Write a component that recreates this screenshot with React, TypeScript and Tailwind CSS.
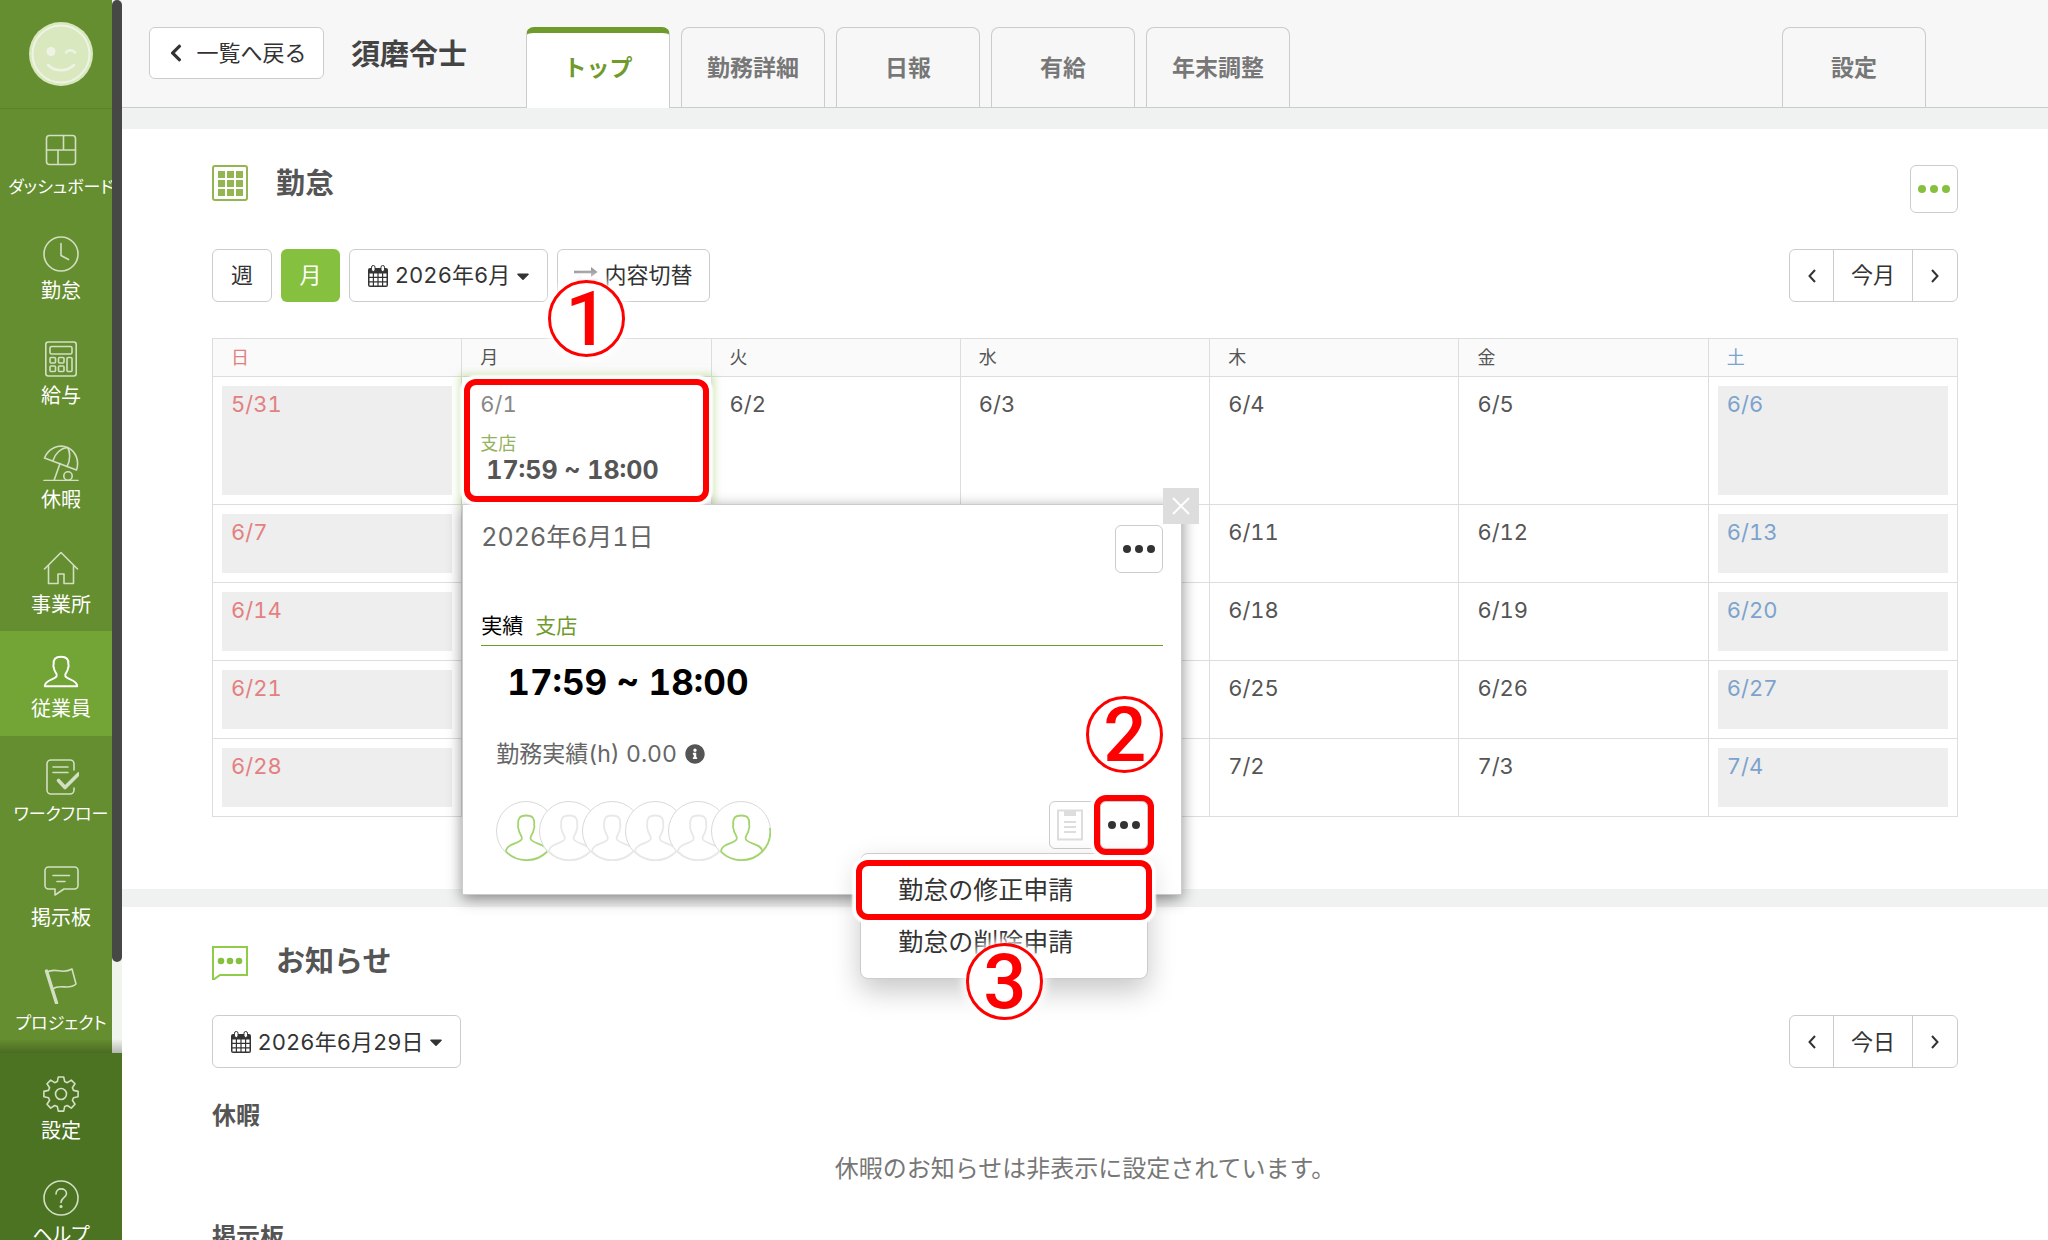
import React from "react";
import { FaCaretDown, FaChevronLeft, FaInfoCircle } from "react-icons/fa";

const OutlineIcon = ({ children }: { children: React.ReactNode }) => (
  <svg
    viewBox="0 0 36 36"
    className="size-9 shrink-0"
    fill="none"
    stroke="currentColor"
    strokeWidth="1.6"
    strokeLinecap="round"
    strokeLinejoin="round"
    aria-hidden="true"
  >
    {children}
  </svg>
);

const PersonPath =
  "M1.8 32.2c0-6.600 10.400-6.400 11.800-10 .5-1.400 0-2.600-1-3.800-1-1.400-1.600-3-1.700-4.600-.6-.6-.7-3.200-.2-3.600-.6-4.800 1.600-7.400 7.300-7.400s7.900 2.600 7.300 7.400c.5.4.4 3-.2 3.600-.1 1.600-.7 3.200-1.700 4.600-1 1.200-1.500 2.400-1 3.800 1.400 3.600 11.800 3.400 11.800 10z";

const icons: Record<string, React.ReactNode> = {
  dashboard: (
    <OutlineIcon>
      <rect x="3.500" y="3.500" width="29" height="29" rx="3" />
      <path d="M3.500 18h29M20.500 3.500V18M15 18v14.500" />
    </OutlineIcon>
  ),
  clock: (
    <OutlineIcon>
      <circle cx="18" cy="18" r="17" />
      <path d="M18 7.500V19.500l7.500 4" />
    </OutlineIcon>
  ),
  calculator: (
    <OutlineIcon>
      <rect x="2.800" y="1" width="30.400" height="34" rx="2.500" />
      <rect x="7" y="5.500" width="22" height="7.500" rx="1.500" />
      <rect x="7" y="16.500" width="5.500" height="5.500" rx="1" />
      <rect x="15.500" y="16.500" width="5.500" height="5.500" rx="1" />
      <rect x="7" y="25" width="5.500" height="5.500" rx="1" />
      <rect x="15.500" y="25" width="5.500" height="5.500" rx="1" />
      <rect x="24" y="16.500" width="5" height="14" rx="1" />
    </OutlineIcon>
  ),
  umbrella: (
    <OutlineIcon>
      <path d="M1.500 13C5 3.500 15.500-1.500 25 2.700c8 3.800 11.500 13.300 8.500 22.300z" />
      <path d="M10 15.500C12 9 17.500 3 24.500 2.500c3 4 3 13-.5 19" />
      <path d="M17 18.500l-6 17M1 35.500h34" />
      <circle cx="25" cy="31" r="4.200" />
    </OutlineIcon>
  ),
  home: (
    <OutlineIcon>
      <path d="M1.500 19L18 2.500 34.500 19M5.500 15.500V33.500h9.500V24h6v9.500h9.500V15.500" />
    </OutlineIcon>
  ),
  person: (
    <OutlineIcon>
      <path d={PersonPath} strokeWidth="2" />
    </OutlineIcon>
  ),
  workflow: (
    <OutlineIcon>
      <path d="M31 11V5a4 4 0 0 0-4-4H8a4 4 0 0 0-4 4v26a4 4 0 0 0 4 4h19a4 4 0 0 0 4-4v-2" />
      <path d="M10 8h15M10 13.500h15" />
      <path d="M15.500 21.500l6.500 7L35.500 15" strokeWidth="3.600" />
    </OutlineIcon>
  ),
  board: (
    <OutlineIcon>
      <path d="M5.500 4h26a3.500 3.500 0 0 1 3.500 3.500v15a3.500 3.500 0 0 1-3.500 3.500H21l-9 6v-6H5.500A3.500 3.500 0 0 1 2 22.500v-15A3.500 3.500 0 0 1 5.500 4z" />
      <path d="M10 12.500h16.500M14 18.500h8" />
    </OutlineIcon>
  ),
  flag: (
    <OutlineIcon>
      <path d="M3.500 3l10 32" strokeWidth="3.400" />
      <path d="M4 4c9-5 15 3 25-3l4 15c-8 7-15-1-23.500 5" />
    </OutlineIcon>
  ),
  gear: (
    <OutlineIcon>
      <circle cx="18" cy="18" r="5.500" />
      <path d="M15.300 1h5.400l1 4.600 2.600 1.100 4-2.600 3.700 3.700-2.600 4 1.100 2.600 4.600 1v5.400l-4.600 1-1.100 2.500 2.600 4-3.700 3.800-4-2.600-2.600 1-1 4.600h-5.400l-1-4.600-2.600-1-4 2.600-3.700-3.800 2.600-4-1.100-2.500-4.600-1v-5.400l4.600-1 1.100-2.600-2.600-4 3.700-3.700 4 2.600 2.600-1.100z" />
    </OutlineIcon>
  ),
  help: (
    <OutlineIcon>
      <circle cx="18" cy="18" r="17" />
      <path d="M13 14c0-7 10.500-6.500 10.500-.5 0 4-5.500 4.500-5.500 9" />
      <circle cx="18" cy="26.500" r=".8" fill="currentColor" />
    </OutlineIcon>
  ),
};

const mainNav = [
  { icon: "dashboard", label: "ダッシュボード" },
  { icon: "clock", label: "勤怠" },
  { icon: "calculator", label: "給与" },
  { icon: "umbrella", label: "休暇" },
  { icon: "home", label: "事業所" },
  { icon: "person", label: "従業員", active: true },
  { icon: "workflow", label: "ワークフロー" },
  { icon: "board", label: "掲示板" },
  { icon: "flag", label: "プロジェクト" },
];

function NavItem({ icon, label, active }: { icon: string; label: string; active?: boolean }) {
  return (
    <a
      href="#"
      className={
        "flex min-h-0 flex-1 flex-col items-center gap-1.5 pt-[23px] " +
        (active ? "bg-[#72a436] text-white" : "text-[#d3dfc3]")
      }
    >
      {icons[icon]}
      <span
        className={
          "whitespace-nowrap leading-[26px] text-white [font-feature-settings:'palt'] " +
          (label.length > 5 ? "text-[17px]" : "text-[20px]")
        }
      >
        {label}
      </span>
    </a>
  );
}

function Sidebar() {
  return (
    <aside className="flex h-full w-[122px] shrink-0 flex-col overflow-hidden">
      <div className="relative flex min-h-0 flex-1 flex-col bg-[#648e2f]">
        <a href="#" aria-label="ホーム" className="flex h-[109px] shrink-0 justify-center border-b border-[#5a8229] pt-[22px]">
          <svg viewBox="0 0 64 64" className="size-16" fill="none" stroke="#edf4e4" strokeLinecap="round" aria-hidden="true">
            <circle cx="32" cy="32" r="32" fill="#d9e8bf" stroke="none" />
            <circle cx="32" cy="32" r="28.500" strokeWidth="2" />
            <circle cx="22" cy="29.500" r="4.500" fill="#edf4e4" stroke="none" />
            <path d="M37 30.500c2-3 7-3 9 0" strokeWidth="2.500" />
            <path d="M19 43c7 7 19 7 26 0" strokeWidth="2.500" />
          </svg>
        </a>
        <nav className="flex min-h-0 flex-1 flex-col pb-1">
          {mainNav.map((n) => (
            <NavItem key={n.label} {...n} />
          ))}
        </nav>
        <div className="absolute inset-y-0 right-0 w-2.5 bg-[#eff4ec]">
          <div className="h-[962px] rounded-[5px] bg-[#464846]" />
        </div>
        <div className="absolute inset-x-0 bottom-0 h-3.5 bg-linear-to-b from-black/0 to-black/25" />
      </div>
      <nav className="flex h-[187px] shrink-0 flex-col overflow-hidden bg-[#4b7322]">
        <div className="flex h-[104px] shrink-0 flex-col">
          <NavItem icon="gear" label="設定" />
        </div>
        <div className="flex h-[104px] shrink-0 flex-col">
          <NavItem icon="help" label="ヘルプ" />
        </div>
      </nav>
    </aside>
  );
}

const tabs = ["トップ", "勤務詳細", "日報", "有給", "年末調整"];

function Tab({ label, active }: { label: string; active?: boolean }) {
  return (
    <a
      href="#"
      aria-current={active ? "page" : undefined}
      className={
        "flex w-36 items-center justify-center rounded-t-lg border-[#ccc] text-[23px] font-bold " +
        (active
          ? "-mb-px h-[81px] border-x border-t-[6px] border-t-[#6f9a2c] bg-white pb-1 text-[#6f9a2c]"
          : "h-20 border border-b-0 pt-0.5 text-[#777]")
      }
    >
      {label}
    </a>
  );
}

function Header() {
  return (
    <header className="flex h-[108px] shrink-0 items-end border-b border-[#ccc] bg-[#f7f7f7] pl-[27px] pr-[122px]">
      <div className="flex items-center gap-[27px] self-start pt-[27px]">
        <button className="flex h-[52px] w-[175px] items-center justify-center gap-2.5 rounded-md border border-[#ccc] bg-white text-[22px] text-[#333]">
          <FaChevronLeft className="size-5" />
          一覧へ戻る
        </button>
        <h1 className="w-[148px] whitespace-nowrap pt-1 text-[29px] font-bold text-[#444]">須磨令士</h1>
      </div>
      <nav className="ml-[27px] flex items-end gap-[11px]">
        {tabs.map((t, i) => (
          <Tab key={t} label={t} active={i === 0} />
        ))}
      </nav>
      <div className="ml-auto">
        <Tab label="設定" />
      </div>
    </header>
  );
}

const Dots = () => (
  <svg viewBox="0 0 32 8" className="h-2 w-8" fill="currentColor" aria-hidden="true">
    <circle cx="4" cy="4" r="4" />
    <circle cx="16" cy="4" r="4" />
    <circle cx="28" cy="4" r="4" />
  </svg>
);

const CalendarIcon = () => (
  <svg viewBox="0 0 20 22" className="h-[22px] w-5" aria-hidden="true">
    <path fill="currentColor" d="M2 3h16a2 2 0 0 1 2 2v15a2 2 0 0 1-2 2H2a2 2 0 0 1-2-2V5a2 2 0 0 1 2-2z" />
    <path
      fill="#fff"
      d="M1.500 8.500h3.300v3.300H1.500zM6 8.500h3.400v3.300H6zM10.600 8.500H14v3.300h-3.400zM15.200 8.500h3.300v3.300h-3.300zM1.500 13h3.300v3.300H1.500zM6 13h3.400v3.300H6zM10.600 13H14v3.300h-3.400zM15.200 13h3.300v3.300h-3.300zM1.500 17.500h3.300v3H1.500zM6 17.500h3.400v3H6zM10.600 17.500H14v3h-3.400zM15.200 17.500h3.300v3h-3.300z"
    />
    <rect x="3.500" y=".5" width="3.500" height="6" rx="1.700" fill="#fff" stroke="currentColor" />
    <rect x="13" y=".5" width="3.500" height="6" rx="1.700" fill="#fff" stroke="currentColor" />
  </svg>
);

const SwapIcon = () => (
  <svg viewBox="0 0 24 18" className="h-[18px] w-6" fill="none" strokeWidth="2.600" aria-hidden="true">
    <path d="M0 5h19" stroke="#999" />
    <path d="M17 0l6.500 5-6.500 5z" fill="#999" />
    <path d="M5 13h19" stroke="#ddd" />
    <path d="M7 8.500l-6.500 4.500L7 17.500z" fill="#eee" />
  </svg>
);

const Angle = ({ d }: { d: string }) => (
  <svg viewBox="0 0 8 14" className="h-3.5 w-2" fill="none" stroke="currentColor" strokeWidth="2" aria-hidden="true">
    <path d={d} />
  </svg>
);

const outlineButton =
  "flex h-[53px] items-center justify-center rounded-md border border-[#ccc] bg-white text-[22px] text-[#333]";

function Pager({ label }: { label: string }) {
  return (
    <div className="ml-auto flex h-[53px] divide-x divide-[#ccc] rounded-md border border-[#ccc] bg-white text-[22px] text-[#333]">
      <button aria-label="前へ" className="flex w-11 items-center justify-center">
        <Angle d="M7 1L1.500 7 7 13" />
      </button>
      <button className="w-[79px]">{label}</button>
      <button aria-label="次へ" className="flex w-11 items-center justify-center">
        <Angle d="M1 1l5.500 6L1 13" />
      </button>
    </div>
  );
}

const StepNumber = ({ n, className }: { n: number; className: string }) => (
  <span
    className={
      "absolute z-30 flex size-[77px] items-center justify-center rounded-full border-[3px] border-[#f00] bg-white font-['Roboto',sans-serif] text-[76px] font-medium leading-none text-[#f00] shadow-[0_0_8px_4px_rgba(255,255,255,0.9)] " +
      className
    }
  >
    {n}
  </span>
);

const Highlight = ({ className }: { className: string }) => (
  <span
    className={
      "pointer-events-none absolute z-20 rounded-xl border-[6px] border-[#f00] shadow-[0_0_2px_4px_rgba(255,255,255,0.95)] " +
      className
    }
  />
);

function Avatar({ green }: { green?: boolean }) {
  return (
    <li className="-mr-[17px] size-[60px] rounded-full bg-white">
      <svg viewBox="0 0 60 60" className="size-[60px]" fill="none" aria-hidden="true">
        <circle cx="30" cy="30" r="29.500" stroke="#d9d9d9" />
        <g stroke={green ? "#a3d46e" : "#e8e8e8"} strokeWidth="1.800" strokeLinejoin="round">
          <path d="M10 50.500c0-8 14-7.500 15.700-12.500.6-2-.5-3.500-1.400-5-1.200-1.700-1.600-3.400-1.700-5-.7-1-.8-3.500-.3-4-.7-6 1-9.500 7.900-9.500s8.600 3.500 7.900 9.500c.5.500.4 3-.3 4-.1 1.600-.5 3.300-1.700 5-.9 1.500-2 3-1.400 5 1.700 5 16 4.500 16.600 12" />
          <path d={green ? "M10 50.500c11 11.500 30 11.500 41.300 0A28.500 28.500 0 0 0 59 27" : "M10 50.500c11 11.500 30 11.500 41.300 0"} />
        </g>
      </svg>
    </li>
  );
}

function DayPopup() {
  return (
    <div
      role="dialog"
      aria-label="2026年6月1日"
      className="absolute left-0 top-full z-10 w-[720px] border border-[#ccc] bg-white pb-[33px] pl-[18px] pr-[18px] pt-5 shadow-[0_4px_14px_rgba(0,0,0,0.45)]"
    >
      <button
        aria-label="閉じる"
        className="absolute -right-[18px] -top-[17px] flex size-9 items-center justify-center bg-[#ddd] text-white"
      >
        <svg viewBox="0 0 18 18" className="size-[18px]" stroke="currentColor" strokeWidth="2" aria-hidden="true">
          <path d="M1 1l16 16M17 1L1 17" />
        </svg>
      </button>
      <div className="flex items-start justify-between">
        <h3 className="text-[25px] leading-6 text-[#666]">2026年6月1日</h3>
        <button aria-label="メニュー" className="flex size-12 items-center justify-center rounded-md border border-[#ccc] text-[#333]">
          <Dots />
        </button>
      </div>
      <div className="mt-[38px] flex gap-3 border-b border-[#6f9a2c] pb-1 text-[21px] leading-[30px]">
        <span className="text-black">実績</span>
        <span className="text-[#6f9a2c]">支店</span>
      </div>
      <p className="mt-3.5 pl-[26px] text-[35px] font-bold leading-11 text-black">17:59 ~ 18:00</p>
      <p className="mt-[34px] flex items-center gap-2 pl-[15px] text-[23px] leading-8 text-[#666]">
        勤務実績(h) 0.00
        <FaInfoCircle className="size-5 text-[#555]" />
      </p>
      <div className="mt-[31px] flex justify-between pl-[15px] pr-[15px]">
        <ul className="flex">
          {[true, false, false, false, false, true].map((g, i) => (
            <Avatar key={i} green={g} />
          ))}
        </ul>
        <div className="flex items-start gap-[3px]">
          <button aria-label="メモ" className="flex size-12 items-center rounded-md border border-[#ccc] pl-[7px]">
            <svg viewBox="0 0 26 32" className="h-8 w-[26px]" fill="none" stroke="#ddd" strokeWidth="2" aria-hidden="true">
              <rect x="1" y="1.500" width="24" height="29" />
              <path d="M7 1h12v6H7z" fill="#ddd" stroke="none" />
              <path d="M7 13h12M7 18h12M7 23h12" />
            </svg>
          </button>
          <div className="relative">
            <button aria-label="勤怠メニュー" className="flex size-12 items-center justify-center rounded-md border border-[#ccc] text-[#333]">
              <Dots />
            </button>
            <Highlight className="-inset-1.5" />
            <StepNumber n={2} className="-left-[14px] -top-[105px]" />
            <div className="absolute right-0 top-[52px] z-10 w-72 rounded-lg border border-[#ccc] bg-white py-2.5 shadow-[0_12px_28px_rgba(0,0,0,0.22)]">
              <div className="relative">
                <button className="block h-[52px] w-full pl-[37px] text-left text-[25px] text-[#333]">勤怠の修正申請</button>
                <Highlight className="-inset-x-[5px] -inset-y-1" />
              </div>
              <button className="block h-[52px] w-full pl-[37px] text-left text-[25px] text-[#333]">勤怠の削除申請</button>
              <StepNumber n={3} className="-bottom-[42px] left-[105px]" />
            </div>
          </div>
        </div>
      </div>
    </div>
  );
}

const weekdays = ["日", "月", "火", "水", "木", "金", "土"];
const weeks = [
  ["5/31", "6/1", "6/2", "6/3", "6/4", "6/5", "6/6"],
  ["6/7", "6/8", "6/9", "6/10", "6/11", "6/12", "6/13"],
  ["6/14", "6/15", "6/16", "6/17", "6/18", "6/19", "6/20"],
  ["6/21", "6/22", "6/23", "6/24", "6/25", "6/26", "6/27"],
  ["6/28", "6/29", "6/30", "7/1", "7/2", "7/3", "7/4"],
];

const dayColor = (i: number) => (i === 0 ? "text-[#e38080]" : i === 6 ? "text-[#7ca3cc]" : "text-[#555]");

function Calendar() {
  return (
    <table className="mt-9 w-full table-fixed border-separate border-spacing-0 border-l border-t border-[#ddd]">
      <thead>
        <tr className="h-[38px] bg-[#fafafa]">
          {weekdays.map((d, i) => (
            <th
              key={d}
              className={"border-b border-r border-[#ddd] p-0 pl-[18px] text-left text-[18px] font-normal leading-6 " + dayColor(i)}
            >
              {d}
            </th>
          ))}
        </tr>
      </thead>
      <tbody>
        {weeks.map((week, w) => (
          <tr key={w} className={w === 0 ? "h-32" : "h-[78px]"}>
            {week.map((day, i) => {
              const selected = day === "6/1";
              const weekend = i === 0 || i === 6;
              return (
                <td
                  key={day}
                  className={
                    "relative h-[inherit] border-b border-r border-[#ddd] p-[9px] align-top text-[22px] leading-7 " +
                    dayColor(i) +
                    (selected ? " shadow-[0_0_8px_2px_rgba(150,200,90,0.5)]" : "")
                  }
                >
                  <div
                    className={
                      "px-[9px] pt-1 " +
                      (w === 0 ? "h-[109px]" : "h-[59px]") +
                      (weekend ? " bg-[#eee]" : "") +
                      (selected ? " text-[#888]" : "")
                    }
                  >
                    {day}
                    {selected && (
                      <>
                        <p className="mt-3 text-[18px] leading-7 text-[#94b35c]">支店</p>
                        <p className="whitespace-nowrap pl-1.5 text-[25px] font-bold leading-6 text-[#555]">17:59 ~ 18:00</p>
                      </>
                    )}
                  </div>
                  {selected && (
                    <>
                      <DayPopup />
                      <Highlight className="inset-x-0.5 bottom-0.5 top-0.5" />
                      <StepNumber n={1} className="-top-[97px] left-[86px]" />
                    </>
                  )}
                </td>
              );
            })}
          </tr>
        ))}
      </tbody>
    </table>
  );
}

function AttendanceSection() {
  return (
    <section className="shrink-0 bg-white px-[90px] pb-[72px] pt-9">
      <div className="flex items-start">
        <svg viewBox="0 0 36 36" className="size-9" aria-hidden="true">
          <rect x="1" y="1" width="34" height="34" rx="2" fill="#fff" stroke="#94b652" strokeWidth="2" />
          <path
            fill="#94b652"
            d="M6 6h7v7H6zM15 6h7v7h-7zM24 6h7v7h-7zM6 15h7v7H6zM15 15h7v7h-7zM24 15h7v7h-7zM6 24h7v7H6zM15 24h7v7h-7zM24 24h7v7h-7z"
          />
        </svg>
        <h2 className="ml-7 text-[29px] font-bold leading-[38px] text-[#555]">勤怠</h2>
        <button aria-label="メニュー" className="ml-auto flex size-12 items-center justify-center rounded-md border border-[#ccc] text-[#86c03f]">
          <Dots />
        </button>
      </div>
      <div className="mt-9 flex gap-[9px]">
        <button className={outlineButton + " w-[60px]"}>週</button>
        <button className="h-[53px] w-[59px] rounded-md bg-[#86c03f] text-[22px] text-white">月</button>
        <button className={outlineButton + " w-[199px] gap-[7px] pl-1"}>
          <CalendarIcon />
          2026年6月
          <FaCaretDown className="-ml-1 size-5" />
        </button>
        <button className={outlineButton + " w-[153px] gap-1.5"}>
          <SwapIcon />
          内容切替
        </button>
        <Pager label="今月" />
      </div>
      <Calendar />
    </section>
  );
}

function NoticeSection() {
  return (
    <section className="bg-white px-[90px] pt-9 text-[24px] leading-8">
      <div className="flex items-center">
        <svg viewBox="0 0 36 36" className="size-9" aria-hidden="true">
          <path d="M1 3h34v28H8l-7 5z" fill="#fff" stroke="#90cc4a" strokeWidth="2" />
          <g fill="#86c03f">
            <circle cx="9" cy="17" r="3.300" />
            <circle cx="18" cy="17" r="3.300" />
            <circle cx="27" cy="17" r="3.300" />
          </g>
        </svg>
        <h2 className="ml-7 text-[29px] font-bold leading-[38px] text-[#555]">お知らせ</h2>
      </div>
      <div className="mt-[34px] flex">
        <button className={outlineButton + " w-[249px] gap-[7px] pl-1"}>
          <CalendarIcon />
          2026年6月29日
          <FaCaretDown className="-ml-1 size-5" />
        </button>
        <Pager label="今日" />
      </div>
      <h3 className="mt-8 font-bold text-[#555]">休暇</h3>
      <p className="mt-[21px] text-center text-[#777]">休暇のお知らせは非表示に設定されています。</p>
      <h3 className="mt-9 font-bold text-[#555]">掲示板</h3>
    </section>
  );
}

export default function App() {
  return (
    <div className="flex h-screen overflow-hidden bg-white font-['Inter','Noto_Sans_CJK_JP',sans-serif] tabular-nums">
      <Sidebar />
      <div className="flex min-w-0 flex-1 flex-col overflow-hidden">
        <Header />
        <main className="flex min-h-0 flex-1 flex-col gap-[18px] overflow-hidden bg-[#f0f2f1] pt-[21px]">
          <AttendanceSection />
          <NoticeSection />
        </main>
      </div>
    </div>
  );
}
